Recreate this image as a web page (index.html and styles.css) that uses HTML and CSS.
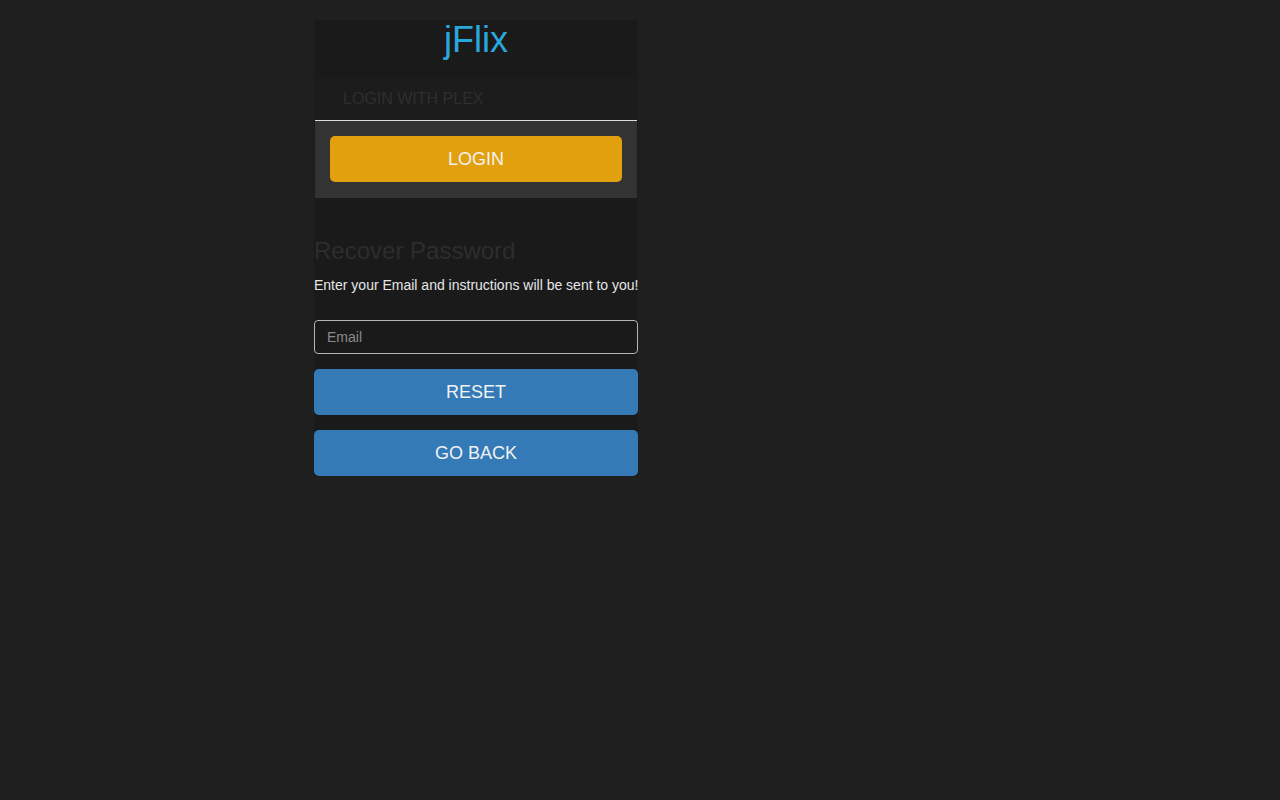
FILE: index.html
```html
<!DOCTYPE html>
<html>
<head>
<meta charset="utf-8">
<link rel="stylesheet" href="styles.css">
</head>
<body>
<div class="page">
  <div class="panel">
    <h1 class="brand">jFlix</h1>
    <div class="tabs">
      <div class="tab-head">LOGIN WITH PLEX</div>
      <div class="tab-body">
        <button class="btn btn-login">LOGIN</button>
      </div>
    </div>
    <h2 class="recover">Recover Password</h2>
    <p class="hint">Enter your Email and instructions will be sent to you!</p>
    <input class="email" type="email" placeholder="Email">
    <button class="btn btn-blue">RESET</button>
    <button class="btn btn-blue">GO BACK</button>
  </div>
</div>
</body>
</html>
```
FILE: styles.css
```css
html, body {
  margin: 0;
  padding: 0;
  background: #1f1f1f;
  font-family: "Liberation Sans", Arial, sans-serif;
}
.page {
  display: flex;
  padding: 20px 0 0 314px;
}
.panel {
  width: 324px;
  background: #1a1a1a;
  display: flex;
  flex-direction: column;
}
.brand {
  margin: 0;
  height: 58px;
  text-align: center;
  color: #2aa8dd;
  font-weight: normal;
  font-size: 36px;
  line-height: 40px;
}
.tabs {
  margin: 0 1px;
  display: flex;
  flex-direction: column;
}
.tab-head {
  height: 42px;
  background: #1c1c1c;
  border-radius: 4px 4px 0 0;
  border-bottom: 1px solid #dcdcdc;
  color: #2e2e2e;
  font-size: 16px;
  line-height: 42px;
  padding-left: 28px;
}
.tab-body {
  background: #333333;
  padding: 15px 15px 16px 15px;
  display: flex;
}
.btn {
  border: none;
  font-family: "Liberation Sans", Arial, sans-serif;
  font-size: 18px;
  color: #f2f2f2;
  height: 46px;
  border-radius: 5px;
  cursor: pointer;
  padding: 0;
}
.btn-login {
  flex: 1;
  background: #e3a00e;
}
.recover {
  margin: 39px 0 0 0;
  font-weight: normal;
  font-size: 24px;
  line-height: 28px;
  color: #2d2d2d;
}
.hint {
  margin: 10px 0 0 0;
  font-size: 14px;
  line-height: 20px;
  color: #e6e6e6;
  white-space: nowrap;
}
.email {
  margin: 25px 0 0 0;
  height: 34px;
  box-sizing: border-box;
  border: 1px solid #b4b4b4;
  border-radius: 4px;
  background: #1a1a1a;
  padding: 0 12px;
  font-family: "Liberation Sans", Arial, sans-serif;
  font-size: 14px;
  color: #ddd;
  outline: none;
}
.email::placeholder {
  color: #8a8a8a;
}
.btn-blue {
  background: #337ab7;
  margin-top: 15px;
}
```
